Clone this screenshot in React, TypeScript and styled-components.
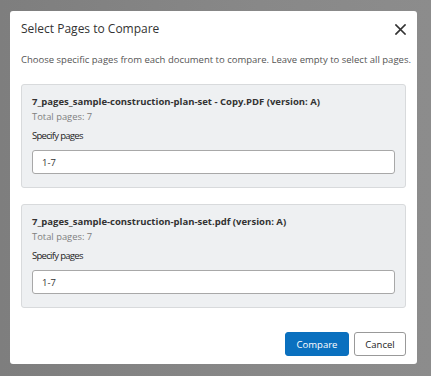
import React from 'react';
import styled, { createGlobalStyle } from 'styled-components';

const GlobalStyle = createGlobalStyle`
  html, body {
    margin: 0;
    padding: 0;
    background: #858585;
    font-family: 'Open Sans', 'Noto Sans', sans-serif;
  }
`;

const documents = [
  { name: '7_pages_sample-construction-plan-set - Copy.PDF', version: 'A', total: 7, range: '1-7' },
  { name: '7_pages_sample-construction-plan-set.pdf', version: 'A', total: 7, range: '1-7' },
];

export default function App() {
  return (
    <>
      <GlobalStyle />
      <Backdrop>
        <Modal>
          <Header>
            <Title>Select Pages to Compare</Title>
            <CloseButton aria-label="Close">
              <svg width="11" height="11" viewBox="0 0 11 11">
                <path d="M1 1 L10 10 M10 1 L1 10" stroke="#333" strokeWidth="1.7" strokeLinecap="square" />
              </svg>
            </CloseButton>
          </Header>
          <Description>
            Choose specific pages from each document to compare. Leave empty to select all pages.
          </Description>
          <CardList>
            {documents.map((doc) => (
              <DocCard key={doc.name}>
                <DocName>{`${doc.name} (version: ${doc.version})`}</DocName>
                <DocMeta>{`Total pages: ${doc.total}`}</DocMeta>
                <FieldLabel>Specify pages</FieldLabel>
                <PageInput defaultValue={doc.range} />
              </DocCard>
            ))}
          </CardList>
          <Footer>
            <Button $primary>Compare</Button>
            <Button>Cancel</Button>
          </Footer>
        </Modal>
      </Backdrop>
    </>
  );
}

const Backdrop = styled.div`
  height: 376px;
  padding: 11px 14px 0 10px;
  box-sizing: border-box;
  background: linear-gradient(90deg, #7e7e7e, #888 60%, #8c8c8c);
`;

const Modal = styled.div`
  width: 407px;
  height: 353px;
  box-sizing: border-box;
  background: #fff;
  border-radius: 3px;
  padding: 10px 11px 8px 11px;
  display: flex;
  flex-direction: column;
`;

const Header = styled.div`
  display: flex;
  align-items: center;
  justify-content: space-between;
  height: 16px;
`;

const Title = styled.div`
  font-size: 12px;
  line-height: 16px;
  color: #333;
`;

const CloseButton = styled.button`
  border: none;
  background: none;
  padding: 0;
  display: flex;
  cursor: pointer;
`;

const Description = styled.div`
  margin-top: 16px;
  font-size: 9.5px;
  line-height: 13px;
  color: #555;
  white-space: nowrap;
`;

const CardList = styled.div`
  margin-top: 18px;
  display: flex;
  flex-direction: column;
  gap: 16px;
`;

const DocCard = styled.div`
  background: #eef0f2;
  border: 1px solid #d8dadc;
  border-radius: 3px;
  padding: 10px 10px 13px 10px;
  display: flex;
  flex-direction: column;
`;

const DocName = styled.div`
  font-size: 9.5px;
  line-height: 13px;
  font-weight: 700;
  color: #333;
`;

const DocMeta = styled.div`
  font-size: 9.4px;
  line-height: 13px;
  color: #808080;
  margin-top: 2px;
`;

const FieldLabel = styled.div`
  margin-top: 6px;
  font-size: 9.5px;
  line-height: 13px;
  color: #222;
  letter-spacing: -0.7px;
`;

const PageInput = styled.input`
  margin-top: 8px;
  height: 24px;
  box-sizing: border-box;
  border: 1px solid #a8a8a8;
  border-radius: 3px;
  background: #fff;
  padding: 0 9px;
  font-family: 'Open Sans', 'Noto Sans', sans-serif;
  font-size: 9.5px;
  color: #333;
  outline: none;
`;

const Footer = styled.div`
  margin-top: auto;
  display: flex;
  justify-content: flex-end;
  gap: 5px;
`;

const Button = styled.button<{ $primary?: boolean }>`
  height: 24px;
  width: ${(p) => (p.$primary ? '64px' : '52px')};
  padding: 0;
  border-radius: 3px;
  font-family: 'Open Sans', 'Noto Sans', sans-serif;
  font-size: 9.5px;
  cursor: pointer;
  border: 1px solid ${(p) => (p.$primary ? '#0a6fbd' : '#999')};
  background: ${(p) => (p.$primary ? '#0a70bf' : '#fff')};
  color: ${(p) => (p.$primary ? '#fff' : '#222')};
`;
